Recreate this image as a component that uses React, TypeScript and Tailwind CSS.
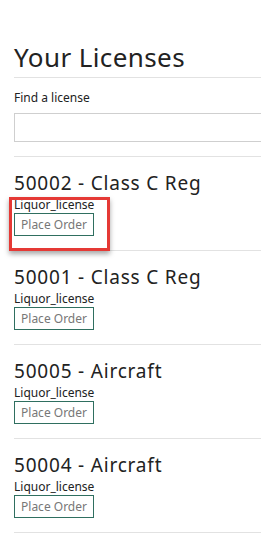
import React from 'react'

const licenses = [
  { id: '50002', name: 'Class C Reg', type: 'Liquor_license' },
  { id: '50001', name: 'Class C Reg', type: 'Liquor_license' },
  { id: '50005', name: 'Aircraft', type: 'Liquor_license' },
  { id: '50004', name: 'Aircraft', type: 'Liquor_license' },
]

const font = { fontFamily: '"Noto Sans", "Open Sans", sans-serif' }

export default function App() {
  return (
    <div className="relative w-[261px] h-[537px] overflow-hidden bg-white" style={font}>
      <div className="w-[320px] pl-[14px] pt-[41px]">
        {/* Header */}
        <h1 className="text-[26px] leading-[32px] tracking-[0.4px] font-normal text-[#222]">Your Licenses</h1>
        <div className="mt-[4px] border-t border-[#e2e2e2]" />

        {/* Search */}
        <label className="block mt-[13px] text-[12px] leading-[14px] text-[#222]">Find a license</label>
        <input className="block mt-[8px] w-full h-[29px] border border-[#cfcfcf] outline-none" />
        <div className="mt-[14px] border-t border-[#e2e2e2]" />

        {/* License list */}
        {licenses.map((l) => (
          <div key={l.id} className="border-b border-[#e2e2e2] pt-[15px] pb-[14px]">
            <h2 className="text-[19px] leading-[22px] tracking-[0.8px] text-[#222]">
              {l.id} - {l.name}
            </h2>
            <div className="mt-[4px] text-[12px] leading-[14px] text-[#222]">{l.type}</div>
            <button className="block mt-[1px] h-[23px] w-[80px] border border-[#2f6f60] text-[12px] leading-[21px] text-[#777] bg-white">
              Place Order
            </button>
          </div>
        ))}
      </div>

      {/* Annotation highlight */}
      <div className="absolute left-[9px] top-[197px] w-[101px] h-[54px] border-[3px] border-[#e53935] shadow-[0_3px_5px_rgba(0,0,0,0.35)]" />
    </div>
  )
}
